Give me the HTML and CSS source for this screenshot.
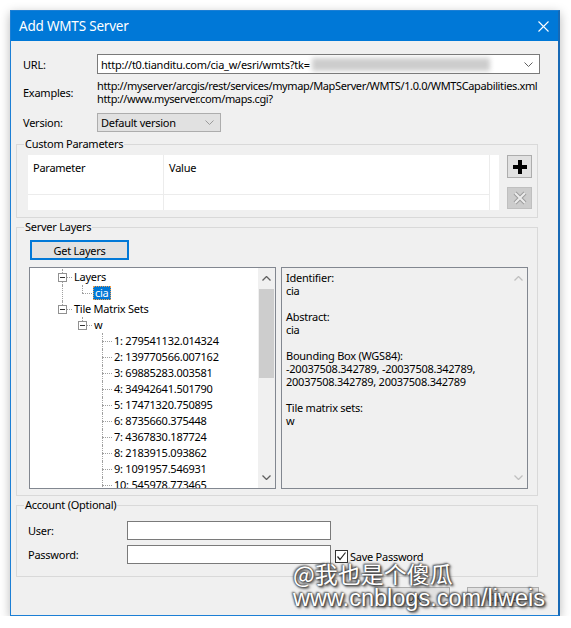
FILE: index.html
```html
<!DOCTYPE html>
<html>
<head>
<meta charset="utf-8">
<title>Add WMTS Server</title>
<link rel="stylesheet" href="styles.css">
</head>
<body>
<div class="window">
  <div class="titlebar">
    <span class="title">Add WMTS Server</span>
    <svg class="close" width="11" height="11" viewBox="0 0 11 11"><path d="M0.5 0.5 L10.5 10.5 M10.5 0.5 L0.5 10.5" stroke="#fff" stroke-width="1.1" fill="none"/></svg>
  </div>
  <div class="content">
    <div class="row url-row">
      <span class="lbl">URL:</span>
      <div class="combo">
        <span class="combo-text">http://t0.tianditu.com/cia_w/esri/wmts?tk=</span>
        <span class="blur"></span>
        <svg class="chev" width="9" height="5" viewBox="0 0 9 5"><path d="M0.5 0.5 L4.5 4.5 L8.5 0.5" stroke="#606060" fill="none"/></svg>
      </div>
    </div>
    <div class="row ex-row">
      <span class="lbl">Examples:</span>
      <div class="ex-lines">
        <div>http://myserver/arcgis/rest/services/mymap/MapServer/WMTS/1.0.0/WMTSCapabilities.xml</div>
        <div>http://www.myserver.com/maps.cgi?</div>
      </div>
    </div>
    <div class="row ver-row">
      <span class="lbl">Version:</span>
      <div class="select">
        <span>Default version</span>
        <svg class="chev light" width="9" height="5" viewBox="0 0 9 5"><path d="M0.5 0.5 L4.5 4.5 L8.5 0.5" stroke="#9a9a9a" fill="none"/></svg>
      </div>
    </div>

    <fieldset class="group g-params">
      <legend>Custom Parameters</legend>
      <div class="params">
        <div class="grid">
          <div class="gc gc1">Parameter</div>
          <div class="gc gc2">Value</div>
          <div class="gc gc3"></div>
          <div class="gc gc1 r2"></div>
          <div class="gc gc2 r2"></div>
          <div class="gc gc3 r2"></div>
        </div>
        <div class="side-btns">
          <div class="icon-btn add">
            <svg width="14" height="14" viewBox="0 0 14 14"><path d="M5 0 H9 V5 H14 V9 H9 V14 H5 V9 H0 V5 H5 Z" fill="#000"/></svg>
          </div>
          <div class="icon-btn del">
            <svg width="14" height="14" viewBox="0 0 14 14"><path d="M2 2 L12 12 M12 2 L2 12" stroke="#9d9d9d" stroke-width="4" fill="none"/><path d="M2 2 L12 12 M12 2 L2 12" stroke="#ececec" stroke-width="2" fill="none"/></svg>
          </div>
        </div>
      </div>
    </fieldset>

    <fieldset class="group g-layers">
      <legend>Server Layers</legend>
      <div class="btn default get-btn">Get Layers</div>
      <div class="layers-row">
        <div class="tree">
          <div class="tree-items">
            <div class="trow"><span class="cell"></span><span class="cell t"><span class="box"></span></span><span class="tl">Layers</span></div>
            <div class="trow"><span class="cell"></span><span class="cell v"></span><span class="cell l"></span><span class="tl sel">cia</span></div>
            <div class="trow"><span class="cell"></span><span class="cell l"><span class="box"></span></span><span class="tl">Tile Matrix Sets</span></div>
            <div class="trow"><span class="cell"></span><span class="cell"></span><span class="cell l"><span class="box"></span></span><span class="tl">w</span></div>
            <div class="trow"><span class="cell"></span><span class="cell"></span><span class="cell"></span><span class="cell t"></span><span class="tl">1: 279541132.014324</span></div>
            <div class="trow"><span class="cell"></span><span class="cell"></span><span class="cell"></span><span class="cell t"></span><span class="tl">2: 139770566.007162</span></div>
            <div class="trow"><span class="cell"></span><span class="cell"></span><span class="cell"></span><span class="cell t"></span><span class="tl">3: 69885283.003581</span></div>
            <div class="trow"><span class="cell"></span><span class="cell"></span><span class="cell"></span><span class="cell t"></span><span class="tl">4: 34942641.501790</span></div>
            <div class="trow"><span class="cell"></span><span class="cell"></span><span class="cell"></span><span class="cell t"></span><span class="tl">5: 17471320.750895</span></div>
            <div class="trow"><span class="cell"></span><span class="cell"></span><span class="cell"></span><span class="cell t"></span><span class="tl">6: 8735660.375448</span></div>
            <div class="trow"><span class="cell"></span><span class="cell"></span><span class="cell"></span><span class="cell t"></span><span class="tl">7: 4367830.187724</span></div>
            <div class="trow"><span class="cell"></span><span class="cell"></span><span class="cell"></span><span class="cell t"></span><span class="tl">8: 2183915.093862</span></div>
            <div class="trow"><span class="cell"></span><span class="cell"></span><span class="cell"></span><span class="cell t"></span><span class="tl">9: 1091957.546931</span></div>
            <div class="trow"><span class="cell"></span><span class="cell"></span><span class="cell"></span><span class="cell t"></span><span class="tl">10: 545978.773465</span></div>
          </div>
          <div class="scrollbar">
            <svg class="sb-arrow" width="9" height="5" viewBox="0 0 9 5"><path d="M0.5 4.5 L4.5 0.5 L8.5 4.5" stroke="#606060" stroke-width="1.3" fill="none"/></svg>
            <div class="sb-track"><div class="sb-thumb"></div></div>
            <svg class="sb-arrow" width="9" height="5" viewBox="0 0 9 5"><path d="M0.5 0.5 L4.5 4.5 L8.5 0.5" stroke="#606060" stroke-width="1.3" fill="none"/></svg>
          </div>
        </div>
        <div class="info">
          <div class="info-text">
            <div>Identifier:</div>
            <div>cia</div>
            <div class="gap"></div>
            <div>Abstract:</div>
            <div>cia</div>
            <div class="gap"></div>
            <div>Bounding Box (WGS84):</div>
            <div>-20037508.342789, -20037508.342789,</div>
            <div>20037508.342789, 20037508.342789</div>
            <div class="gap"></div>
            <div>Tile matrix sets:</div>
            <div>w</div>
          </div>
          <div class="scrollbar disabled">
            <svg class="sb-arrow" width="9" height="5" viewBox="0 0 9 5"><path d="M0.5 4.5 L4.5 0.5 L8.5 4.5" stroke="#c0c0c0" stroke-width="1.3" fill="none"/></svg>
            <div class="sb-track"></div>
            <svg class="sb-arrow" width="9" height="5" viewBox="0 0 9 5"><path d="M0.5 0.5 L4.5 4.5 L8.5 0.5" stroke="#c0c0c0" stroke-width="1.3" fill="none"/></svg>
          </div>
        </div>
      </div>
    </fieldset>

    <fieldset class="group g-account">
      <legend>Account (Optional)</legend>
      <div class="acc-row">
        <span class="acc-lbl">User:</span>
        <div class="textbox"></div>
      </div>
      <div class="acc-row second">
        <span class="acc-lbl">Password:</span>
        <div class="textbox"></div>
        <span class="check">
          <svg width="13" height="13" viewBox="0 0 13 13"><rect x="0.5" y="0.5" width="12" height="12" fill="#fff" stroke="#333"/><path d="M2.5 6.5 L5 9.5 L10.5 2.5" stroke="#222" stroke-width="1.2" fill="none"/></svg>
        </span>
        <span class="check-lbl">Save Password</span>
      </div>
    </fieldset>

    <div class="dlg-btns">
      <div class="btn ok">OK</div>
      <div class="btn cancel">Cancel</div>
    </div>
  </div>
  <div class="watermark">
    <div class="wm1">@我也是个傻瓜</div>
    <div class="wm2">www.cnblogs.com/liweis</div>
  </div>
</div>
</body>
</html>
```

FILE: styles.css
```css
* { box-sizing: border-box; }
html, body { margin: 0; padding: 0; background: #ffffff; }
body {
  font-family: "Noto Sans", "Open Sans", sans-serif;
  font-size: 11px;
  letter-spacing: -0.25px;
  color: #000;
}
.window {
  position: relative;
  width: 550px;
  height: 606px;
  margin: 10px 0 0 10px;
  border: 1px solid #1c7fd5;
  border-right: 2px solid #1769b5;
  background: #f0f0f0;
  box-shadow: 0 3px 10px rgba(0,0,0,0.28);
  display: flex;
  flex-direction: column;
}
.titlebar {
  height: 30px;
  background: #0078d7;
  display: flex;
  align-items: center;
  padding-left: 8px;
  padding-right: 9px;
  color: #fff;
  flex: none;
}
.title { font-size: 13.5px; letter-spacing: -0.2px; flex: 1; padding-bottom: 1px; }
.close { flex: none; margin-top: 1px; }

.content { display: flex; flex-direction: column; flex: 1; }
.row { display: flex; align-items: center; padding-left: 12px; }
.lbl { width: 74px; flex: none; line-height: 13px; }
.url-row { margin-top: 13px; height: 20px; }
.combo {
  width: 443px;
  height: 20px;
  background: #fff;
  border: 1px solid #7a7a7a;
  display: flex;
  align-items: center;
  padding-left: 3px;
  overflow: hidden;
}
.combo-text { flex: none; white-space: nowrap; }
.blur {
  width: 178px;
  height: 13px;
  margin-left: 2px;
  background: #cdcdcd;
  filter: blur(2.5px);
  flex: none;
}
.chev { margin-left: auto; margin-right: 6px; flex: none; }
.ex-row { margin-top: 5px; }
.ex-lines { line-height: 13px; white-space: nowrap; letter-spacing: -0.37px; }
.ver-row { margin-top: 8px; height: 19px; }
.select {
  width: 124px;
  height: 19px;
  background: #e1e1e1;
  border: 1px solid #adadad;
  display: flex;
  align-items: center;
  padding-left: 3px;
}

.group {
  margin: 0 20px 0 5px;
  padding: 0;
  border: 1px solid #d9d9d9;
  min-inline-size: 0;
}
.group legend {
  margin-left: 7px;
  padding: 0 1px;
  line-height: 14px;
  height: 14px;
}
.g-params { margin-top: 5px; padding: 4px 0 7px 0; }
.params { display: flex; margin-left: 11px; }
.grid {
  width: 471px;
  height: 55px;
  background: #fff;
  display: grid;
  grid-template-columns: 136px 326px 1fr;
  grid-template-rows: 40px 1fr;
}
.gc { padding: 5px 0 0 5px; line-height: 15px; border-right: 1px solid #ececec; border-bottom: 1px solid #ececec; }
.gc3 { border-right: 0; border-bottom: 0; }
.gc.r2 { border-bottom: 0; }
.side-btns { margin-left: 8px; display: flex; flex-direction: column; }
.icon-btn {
  width: 25px;
  display: flex;
  align-items: center;
  justify-content: center;
  border: 1px solid #adadad;
  background: #e1e1e1;
}
.icon-btn.add { height: 23px; }
.icon-btn.del { height: 22px; margin-top: 9px; background: #cccccc; border-color: #bfbfbf; }

.btn {
  height: 20px;
  border: 1px solid #adadad;
  background: #e1e1e1;
  display: flex;
  align-items: center;
  justify-content: center;
}
.btn.default { border-color: #0078d7; box-shadow: inset 0 0 0 1px #0078d7; }
.g-layers { margin-top: 2px; padding: 6px 0 6px 0; }
.get-btn { width: 99px; margin-left: 13px; }
.layers-row { display: flex; margin-top: 7px; padding-left: 12px; gap: 5px; height: 222px; }
.tree {
  width: 247px;
  height: 222px;
  background: #fff;
  border: 1px solid #828790;
  display: flex;
  overflow: hidden;
}
.tree-items { flex: 1; padding: 1px 0 0 2px; overflow: hidden; }
.trow { display: flex; height: 16px; line-height: 16px; white-space: nowrap; }
.cell { width: 20px; height: 16px; position: relative; flex: none; }
.cell.v::before, .cell.t::before, .cell.l::before {
  content: "";
  position: absolute;
  left: 10px;
  top: 0;
  bottom: 0;
  border-left: 1px dotted #a0a0a0;
}
.cell.l::before { bottom: 8px; }
.cell.t::after, .cell.l::after {
  content: "";
  position: absolute;
  left: 10px;
  right: 0;
  top: 8px;
  border-top: 1px dotted #a0a0a0;
}
.box {
  position: absolute;
  left: 6px;
  top: 4px;
  width: 9px;
  height: 9px;
  border: 1px solid #919191;
  background: #fff;
  z-index: 1;
}
.box::after {
  content: "";
  position: absolute;
  left: 1px;
  top: 3px;
  width: 5px;
  height: 1px;
  background: #333;
}
.tl { margin-left: 1px; padding: 0 1px; height: 16px; }
.tl.sel {
  background: #0078d7;
  color: #fff;
  outline: 1px dotted #f0a050;
  outline-offset: -1px;
  height: 14px;
  line-height: 14px;
  margin-top: 1px;
  padding: 0 2px;
}
.scrollbar {
  width: 17px;
  flex: none;
  background: #f0f0f0;
  display: flex;
  flex-direction: column;
  align-items: center;
  padding: 8px 0 8px;
}
.sb-track { flex: 1; width: 100%; padding: 8px 1px 0; }
.sb-thumb { height: 89px; background: #cdcdcd; }
.scrollbar.disabled { background: transparent; }
.info {
  width: 247px;
  height: 222px;
  border: 1px solid #828790;
  display: flex;
}
.info-text { flex: 1; padding: 3px 0 0 4px; line-height: 13px; white-space: nowrap; }
.info-text .gap { height: 13px; }

.g-account { margin-top: 2px; padding: 9px 0 12px 11px; }
.g-account legend { margin-left: -4px; }
.acc-row { display: flex; align-items: center; height: 19px; }
.acc-row.second { margin-top: 5px; }
.acc-lbl { width: 99px; flex: none; }
.textbox { width: 204px; height: 19px; background: #fff; border: 1px solid #7a7a7a; flex: none; }
.check { margin-left: 4px; display: flex; margin-top: 4px; }
.check-lbl { margin-left: 2px; margin-top: 4px; }

.dlg-btns { display: flex; justify-content: flex-end; gap: 17px; margin: 10px 19px 0 0; }
.btn.ok { width: 73px; }
.btn.cancel { width: 72px; }

.watermark {
  position: absolute;
  left: 282px;
  top: 550px;
  color: #fff;
  letter-spacing: 0;
  white-space: nowrap;
  text-shadow: 0 0 2px #444, 1px 1px 2px #333, -1px -1px 2px #555, 2px 2px 3px #666;
}
.wm1 { font-family: "Noto Sans CJK SC", sans-serif; font-size: 23px; line-height: 25px; }
.wm2 { font-family: "Liberation Sans", Arial, sans-serif; font-size: 23.5px; line-height: 25px; }
```
